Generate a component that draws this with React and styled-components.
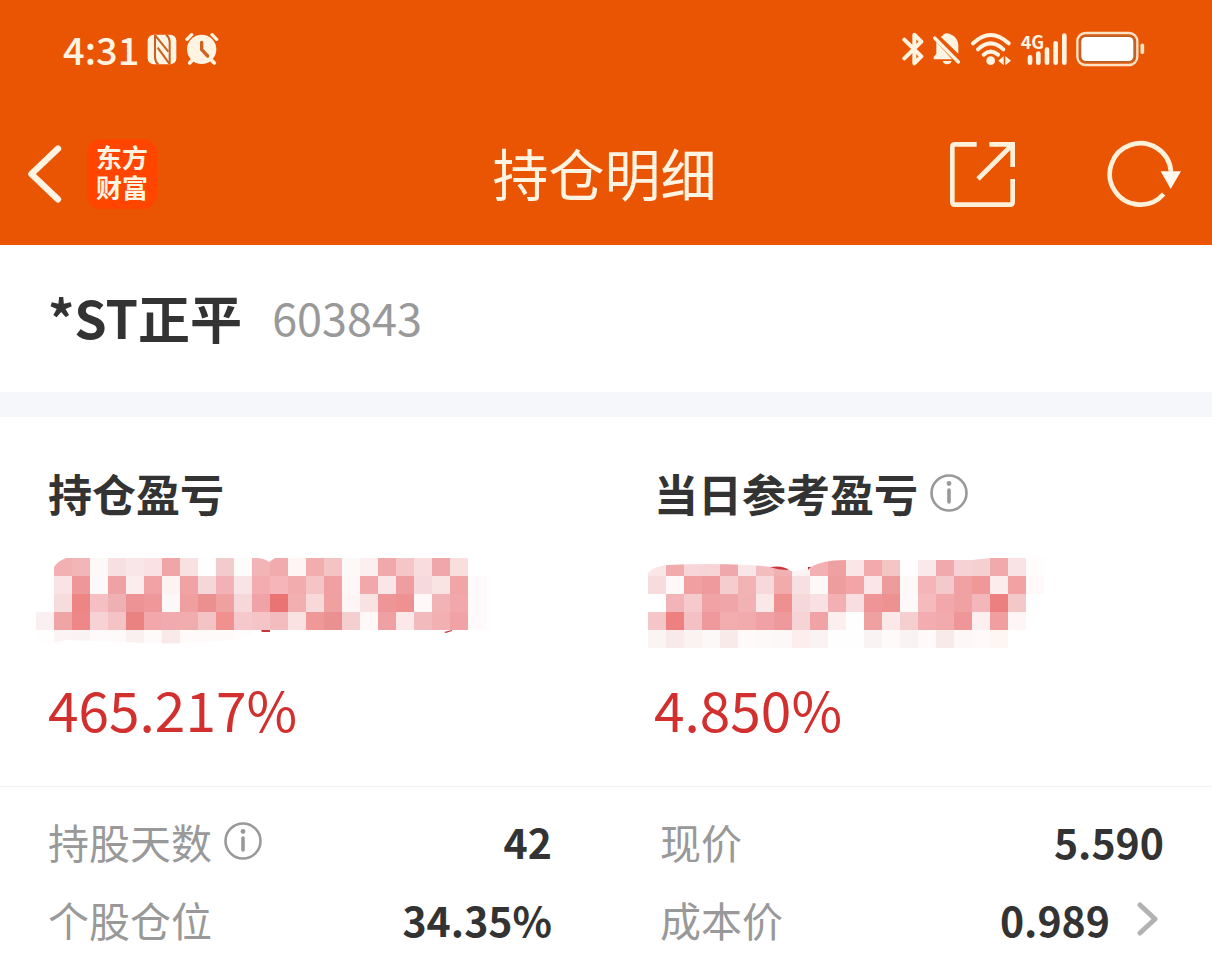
import React from 'react'
import styled, { createGlobalStyle } from 'styled-components'

const GlobalStyle = createGlobalStyle`
  * {
    box-sizing: border-box;
  }
  body {
    margin: 0;
    background: #ffffff;
    color: #333333;
    font-family: "Noto Sans CJK SC", "Noto Sans", sans-serif;
  }
  h1, h2, p, dl, dt, dd {
    margin: 0;
  }
  svg {
    display: block;
    flex-shrink: 0;
  }
`

const Header = styled.header`
  background: #ea5504;
  color: #fff3e2;
`

const StatusBar = styled.div`
  display: flex;
  justify-content: space-between;
  align-items: center;
  height: 98px;
  padding: 0 67px 0 63px;
`

const StatusGroup = styled.div`
  display: flex;
  align-items: center;
  gap: 8px;
`

const Clock = styled.time`
  font-size: 38px;
  line-height: 40px;
  font-weight: 500;
`

const NavBar = styled.nav`
  display: grid;
  grid-template-columns: 1fr auto 1fr;
  align-items: center;
  height: 147px;
  padding: 5px 30px 0 27px;
`

const NavSide = styled.div`
  display: flex;
  align-items: center;
  justify-content: ${({ $end }) => ($end ? 'flex-end' : 'flex-start')};
  gap: ${({ $end }) => ($end ? '90px' : '24px')};
`

const IconButton = styled.button`
  display: flex;
  padding: 0;
  border: none;
  background: none;
  color: inherit;
  cursor: pointer;
`

const AppLogo = styled.a`
  display: flex;
  align-items: center;
  justify-content: center;
  width: 70px;
  height: 70px;
  padding-bottom: 4px;
  border-radius: 14px;
  background: #ff4500;
  color: #fff3e2;
  font-size: 26px;
  line-height: 30px;
  font-weight: 700;
  text-align: center;
  text-decoration: none;
`

const PageTitle = styled.h1`
  padding-bottom: 4px;
  font-size: 56px;
  line-height: 80px;
  font-weight: 400;
`

const StockBar = styled.section`
  display: flex;
  align-items: center;
  gap: 30px;
  height: 172px;
  padding: 0 48px 4px;
  border-bottom: 25px solid #f5f7fa;
`

const StockName = styled.h2`
  font-size: 52px;
  line-height: 60px;
  font-weight: 700;
`

const StockCode = styled.span`
  font-size: 45px;
  line-height: 60px;
  color: #999999;
`

const Summary = styled.section`
  display: grid;
  grid-template-columns: 1fr 1fr;
  border-bottom: 1px solid #f3f3f3;
`

const SummaryItem = styled.div`
  padding: 46px 0 38px 48px;
`

const SummaryTitle = styled.h2`
  display: flex;
  align-items: center;
  gap: 12px;
  margin-bottom: 35px;
  font-size: 44px;
  line-height: 60px;
  font-weight: 700;
`

const MosaicSvg = styled.svg`
  margin-left: -12px;
`

const Percent = styled.p`
  margin-top: 20px;
  font-size: 55px;
  line-height: 80px;
  color: #d2302f;
`

const Details = styled.dl`
  display: grid;
  grid-template-columns: 1fr 1fr;
  column-gap: 108px;
  padding: 15px 48px 0;
`

const DetailRow = styled.div`
  display: flex;
  align-items: center;
  justify-content: space-between;
  height: 78px;
  font-size: 41px;
  line-height: 60px;
`

const DetailLabel = styled.dt`
  display: flex;
  align-items: center;
  gap: 12px;
  color: #999999;
`

const DetailValue = styled.dd`
  display: flex;
  align-items: center;
  gap: 20px;
  font-weight: 700;
`

const NfcIcon = () => (
  <svg width="30" height="32" viewBox="293 38 90 96">
    <rect x="295" y="43" width="86" height="89" rx="18" fill="#fff3e2" />
    <path d="M317 44V112Q318 126 327 132M361 131V64Q360 50 350 43" fill="none" stroke="#c9601f" strokeWidth="6" />
    <path d="M318 46L357 94M325 82L360 130" stroke="#c9601f" strokeWidth="6" />
  </svg>
)

const AlarmIcon = () => (
  <svg width="34" height="34" viewBox="410 36 102 102" fill="none" strokeLinecap="round">
    <circle cx="460" cy="88" r="44" fill="#fff3e2" />
    <path d="M416 58L430 44M505 58L491 44" stroke="#fff3e2" strokeWidth="10" />
    <path d="M434 118L424 129M487 118L498 129" stroke="#fff3e2" strokeWidth="11" />
    <path d="M460 67V89L478 108" stroke="#cf6220" strokeWidth="10" />
  </svg>
)

const BluetoothIcon = () => (
  <svg width="22" height="34" viewBox="39 36 66 102" fill="none">
    <path d="M46 59L97 109L76 130V44L97 65L46 115" stroke="#fff3e2" strokeWidth="12" strokeLinejoin="round" strokeLinecap="round" />
  </svg>
)

const MuteIcon = () => (
  <svg width="30" height="34" viewBox="129 36 90 102">
    <path d="M155 50Q163 48 164 43Q174 36 184 43Q207 52 208 75V101Z" fill="#fff3e2" />
    <path d="M142 66L189 118H134V111L142 101Z" fill="#fff3e2" />
    <path d="M137 54L208 126" stroke="#fff3e2" strokeWidth="10" strokeLinecap="round" />
    <path d="M161 123H188Q184 133 174 133Q165 133 161 123Z" fill="#fff3e2" />
  </svg>
)

const WifiIcon = () => (
  <svg width="42" height="34" viewBox="240 36 126 102">
    <g fill="none" stroke="#fff3e2" strokeWidth="12" strokeLinecap="round">
      <path d="M249 70Q302 20 356 70" />
      <path d="M264 88Q302 52 340 88" />
      <path d="M281 104Q302 86 324 104" />
    </g>
    <circle cx="302" cy="122" r="13" fill="#fff3e2" />
    <path d="M341 108V136L325 122ZM346 108V136L363 122Z" fill="#fff3e2" />
  </svg>
)

const SignalIcon = () => (
  <svg width="48" height="44" viewBox="390 21 144 132">
    <text x="392" y="86" fontSize="54" fontWeight="700" fontFamily="Noto Sans CJK SC, sans-serif" fill="#fff3e2">4G</text>
    <path d="M420 112V128M445 101V128M471 89V128M497 70V128M523 47V128" stroke="#fff3e2" strokeWidth="14" strokeLinecap="round" />
  </svg>
)

const BatteryIcon = () => (
  <svg width="69" height="36" viewBox="560 33 207 108">
    <rect x="564" y="39" width="180" height="96" rx="25" fill="none" stroke="#ffe3c6" strokeWidth="7" />
    <rect x="571" y="46" width="166" height="82" rx="19" fill="#b8652c" />
    <rect x="576" y="51" width="156" height="72" rx="14" fill="#ffffff" />
    <path d="M759 76V97" stroke="#ffe3c6" strokeWidth="11" strokeLinecap="round" />
  </svg>
)

const BackIcon = () => (
  <svg width="36" height="60" viewBox="51 57 108 180">
    <path d="M144 71L64 147L144 223" fill="none" stroke="#fff3e2" strokeWidth="19" strokeLinecap="round" strokeLinejoin="round" />
  </svg>
)

const ShareIcon = () => (
  <svg width="67" height="67" viewBox="57 48 201 201" fill="none" stroke="#fff0da" strokeWidth="14">
    <path d="M140 58H75Q67 58 67 66V230Q67 239 75 239H240Q248 239 248 230V162" />
    <path d="M178 58H248V126M246 60L144 162" />
  </svg>
)

const RefreshIcon = () => (
  <svg width="76" height="68" viewBox="528 45 228 204">
    <path d="M723 140A92 92 0 1 0 701 207" fill="none" stroke="#fff0da" strokeWidth="14" />
    <path d="M692 139H753L722 192Z" fill="#fff8ee" />
  </svg>
)

const InfoIcon = () => (
  <svg width="38" height="38" viewBox="0 0 38 38">
    <circle cx="19" cy="19" r="17.5" fill="none" stroke="#999999" strokeWidth="2.6" />
    <circle cx="19" cy="9.5" r="2.4" fill="#999999" />
    <path d="M19 16V28" stroke="#999999" strokeWidth="3.6" strokeLinecap="round" />
  </svg>
)

const ChevronIcon = () => (
  <svg width="34" height="34" viewBox="0 0 34 34">
    <path d="M10 3L25 17L10 31" fill="none" stroke="#b2b2b2" strokeWidth="5" strokeLinecap="round" strokeLinejoin="round" />
  </svg>
)

// one string per mosaic row, one hex colour per cell
const holdingRows = [
  'ffffff f2b0b3 f2b6b8 fdf9f9 f8e0e0 f9e6e8 fae2e4 f0a5a7 f9e0e1 fefefe f2cbcd fefbfb f2b4b6 f2abad fef5f5 f2adae f4c3c3 fef9f9 fdeff0 f0a9aa f4c6c7 f8dcde f0a7a9 f8dedd ffffff',
  'ffffff f9e3e4 ee9799 fdf9f8 efa2a3 fbecee f0a2a4 fdf3f2 f0a2a5 f6d7d9 f2b1b4 f8e4e6 f3acb0 f6b5b8 f3acad f4c4c6 f0a0a0 fef7f8 f2a8ab fae6e7 ef9d9e f6d9dc fae4e3 f0a6a7 fefafa',
  'ffffff f6dcdd ee8585 f5bfc3 efb0b3 ed9396 ef9899 fdf8f8 ef9f9f ec908f efa0a0 f6d8da f0a3a6 ea7474 f2afb0 f8d9da efa0a0 fef6f6 f8e3e2 ee9697 ef9190 fef8f8 f2b3b6 f2a8aa fefafa',
  'fbf0f1 efa5a6 ee8787 f6d2d5 f5c2c5 ea8282 f2a8ab f1aaae f1acae f4c3c5 f09190 f5c9cb f5c4c7 f3bcbf fae2e2 ee9898 ea9090 f5cfd0 fef8f8 efa0a2 fbe9ea f2babc f2b0b2 f0a2a4 fefafa',
  'fefefe fbf3f4 faf3f4 fef9fa fefafa fbf0f0 fefafa fae9e9 fefafa fefafa fefafa fefcfc',
]

const todayRows = [
  'fbe6e7 f1abad f7d5d8 f7d5d6 efa9ad fae6e7 f3bcbf f1b0b2 fdf3f3 f3b0b3 efa0a0 fae6e6 f2aaac f3c5c5 fefefe fbe8ea f0aaad f7d2d5 f5d0d1 f1a9ab f9e3e4 fffcfc',
  'f7dcdd fef8f8 f0a0a1 ef9a9c f5cdce f2b3b5 f7d8db f2aaac f8dfe1 fef9f9 ee9d9e f2a4a6 fae6e8 ee9b9c fef9f9 f3b5b8 f4c9cb f0a1a4 ef9897 fcecec f2a2a3 fff9f9',
  'ffffff f2b4b7 f4cacc f0a2a4 f0a5a9 f2b2b4 fae7e8 ee9090 f6d8da f9e0e2 f2b0b3 f8dee0 ef9597 ee9191 fef9f9 f4babd f2a8ab f0a2a3 f3b7bb ec7f80 f4c8c9',
  'f4c6c8 ee8080 f3c1c4 ef999c f2aeaf f2abac f0a1a5 ee999b f6d3d5 f0a2a4 fdeeef fefefe efa0a1 fbe8e8 f5cfcf f3adb0 f2abad ee9698 fdefef f09e9f fef6f6',
  'faf4f3 f8eaea faf3f2 fdf8f8 f9eaea fefafa fdf9f9 fdf8f8 fdeeed faf3f3 fefefe fefefe faf3f4 fefafa faf3f3 fefafa f9eaea fdf7f7 fefafa fdf6f3',
]

const CELL = 18

const Mosaic = ({ id, rows, shift = 0, outline, marks }) => (
  <MosaicSvg width="456" height="90" viewBox={`${-shift} 0 456 90`} shapeRendering="crispEdges" aria-hidden="true">
    <clipPath id={id}>
      <path d={outline} />
    </clipPath>
    <g clipPath={`url(#${id})`}>
      {rows.map((row, y) =>
        row.split(' ').map((color, x) => (
          <rect key={`${x}-${y}`} x={x * CELL} y={y * CELL} width={CELL} height={CELL} fill={`#${color}`} />
        ))
      )}
    </g>
    <path d={marks} fill="#c9363a" shapeRendering="auto" />
  </MosaicSvg>
)

const App = () => {
  return (
    <>
      <GlobalStyle />
      <Header>
        <StatusBar>
          <StatusGroup>
            <Clock>4:31</Clock>
            <NfcIcon />
            <AlarmIcon />
          </StatusGroup>
          <StatusGroup>
            <BluetoothIcon />
            <MuteIcon />
            <WifiIcon />
            <SignalIcon />
            <BatteryIcon />
          </StatusGroup>
        </StatusBar>
        <NavBar>
          <NavSide>
            <IconButton aria-label="返回"><BackIcon /></IconButton>
            <AppLogo href="#">东方<br />财富</AppLogo>
          </NavSide>
          <PageTitle>持仓明细</PageTitle>
          <NavSide $end>
            <IconButton aria-label="分享"><ShareIcon /></IconButton>
            <IconButton aria-label="刷新"><RefreshIcon /></IconButton>
          </NavSide>
        </NavBar>
      </Header>

      <main>
        <StockBar>
          <StockName>*ST正平</StockName>
          <StockCode>603843</StockCode>
        </StockBar>

        <Summary>
          <SummaryItem>
            <SummaryTitle>持仓盈亏</SummaryTitle>
            <Mosaic
              id="holding"
              rows={holdingRows}
              outline="M0 0V84H24L30 82L90 84Q130 87 160 84L200 82Q212 79 220 73H450V0H239L233 4Q228 0 220 0H30Q22 3 18 9V34Q14 36 18 44V54H0Z"
              marks="M225 72H234V74H226ZM408 74L416 72V73L410 75Z"
            />
            <Percent>465.217%</Percent>
          </SummaryItem>
          <SummaryItem>
            <SummaryTitle>
              当日参考盈亏
              <IconButton aria-label="说明"><InfoIcon /></IconButton>
            </SummaryTitle>
            <Mosaic
              id="today"
              rows={todayRows}
              shift={6}
              outline="M0 15Q6 8 20 7Q60 5 100 7Q132 9 144 13L160 11Q172 2 198 2H324L342 0H396V90H0Z"
              marks="M122 9Q135 7 141 12Q130 12 122 9ZM160 9L163 9L160 12Z"
            />
            <Percent>4.850%</Percent>
          </SummaryItem>
        </Summary>

        <Details>
          <DetailRow>
            <DetailLabel>
              持股天数
              <IconButton aria-label="说明"><InfoIcon /></IconButton>
            </DetailLabel>
            <DetailValue>42</DetailValue>
          </DetailRow>
          <DetailRow>
            <DetailLabel>现价</DetailLabel>
            <DetailValue>5.590</DetailValue>
          </DetailRow>
          <DetailRow>
            <DetailLabel>个股仓位</DetailLabel>
            <DetailValue>34.35%</DetailValue>
          </DetailRow>
          <DetailRow>
            <DetailLabel>成本价</DetailLabel>
            <DetailValue>
              0.989
              <IconButton aria-label="查看成本价"><ChevronIcon /></IconButton>
            </DetailValue>
          </DetailRow>
        </Details>
      </main>
    </>
  )
}

export default App
